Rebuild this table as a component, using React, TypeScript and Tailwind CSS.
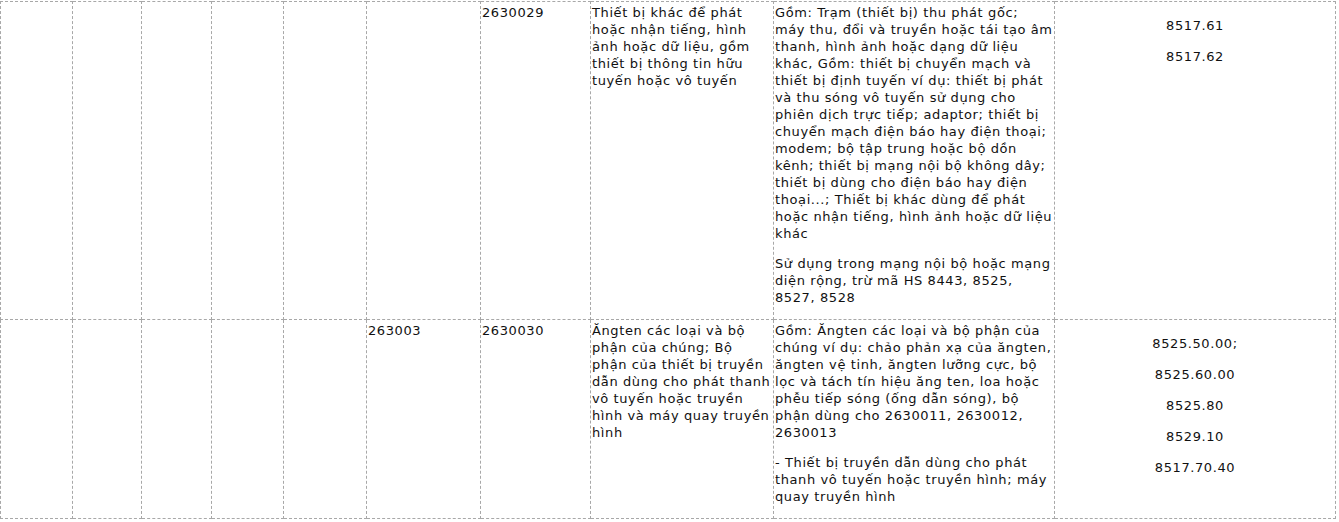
import React from 'react'

type Row = {
    group?: string
    code: string
    name: string
    details: string[]
    hs: string[]
}

const rows: Row[] = [
    {
        code: '2630029',
        name: 'Thiết bị khác để phát hoặc nhận tiếng, hình ảnh hoặc dữ liệu, gồm thiết bị thông tin hữu tuyến hoặc vô tuyến',
        details: [
            'Gồm: Trạm (thiết bị) thu phát gốc; máy thu, đổi và truyền hoặc tái tạo âm thanh, hình ảnh hoặc dạng dữ liệu khác, Gồm: thiết bị chuyển mạch và thiết bị định tuyến ví dụ: thiết bị phát và thu sóng vô tuyến sử dụng cho phiên dịch trực tiếp; adaptor; thiết bị chuyển mạch điện báo hay điện thoại; modem; bộ tập trung hoặc bộ dồn kênh; thiết bị mạng nội bộ không dây; thiết bị dùng cho điện báo hay điện thoại...; Thiết bị khác dùng để phát hoặc nhận tiếng, hình ảnh hoặc dữ liệu khác',
            'Sử dụng trong mạng nội bộ hoặc mạng diện rộng, trừ mã HS 8443, 8525, 8527, 8528'
        ],
        hs: ['8517.61', '8517.62']
    },
    {
        group: '263003',
        code: '2630030',
        name: 'Ăngten các loại và bộ phận của chúng; Bộ phận của thiết bị truyền dẫn dùng cho phát thanh vô tuyến hoặc truyền hình và máy quay truyền hình',
        details: [
            'Gồm: Ăngten các loại và bộ phận của chúng ví dụ: chảo phản xạ của ăngten, ăngten vệ tinh, ăngten lưỡng cực, bộ lọc và tách tín hiệu ăng ten, loa hoặc phễu tiếp sóng (ống dẫn sóng), bộ phận dùng cho 2630011, 2630012, 2630013',
            '- Thiết bị truyền dẫn dùng cho phát thanh vô tuyến hoặc truyền hình; máy quay truyền hình'
        ],
        hs: ['8525.50.00;', '8525.60.00', '8525.80', '8529.10', '8517.70.40']
    }
]

const cell = 'border border-dashed border-[#a8a8a8] align-top px-px pt-[2px] pb-0'

export default function App() {
    return (
        <div className="bg-white min-h-screen pt-px text-[#111] text-[13px] leading-[17px] tracking-[0.6px] font-['DejaVu_Sans',Verdana,sans-serif]">
            <table className="table-fixed border-collapse w-[1335px]">
                <colgroup>
                    <col className="w-[72px]" />
                    <col className="w-[69px]" />
                    <col className="w-[70px]" />
                    <col className="w-[72px]" />
                    <col className="w-[83px]" />
                    <col className="w-[114px]" />
                    <col className="w-[110px]" />
                    <col className="w-[183px]" />
                    <col className="w-[281px]" />
                    <col className="w-[281px]" />
                </colgroup>
                <tbody>
                    {rows.map((row) => (
                        <tr key={row.code}>
                            <td className={cell}></td>
                            <td className={cell}></td>
                            <td className={cell}></td>
                            <td className={cell}></td>
                            <td className={cell}></td>
                            <td className={cell}>{row.group}</td>
                            <td className={cell}>{row.code}</td>
                            <td className={cell}>{row.name}</td>
                            <td className={cell}>
                                {row.details.map((d, i) => (
                                    <p key={i} className="mb-[13px]">
                                        {d}
                                    </p>
                                ))}
                            </td>
                            <td className={cell}>
                                {row.hs.map((h) => (
                                    <p key={h} className="my-[13px] text-center leading-[18px]">
                                        {h}
                                    </p>
                                ))}
                            </td>
                        </tr>
                    ))}
                </tbody>
            </table>
        </div>
    )
}
